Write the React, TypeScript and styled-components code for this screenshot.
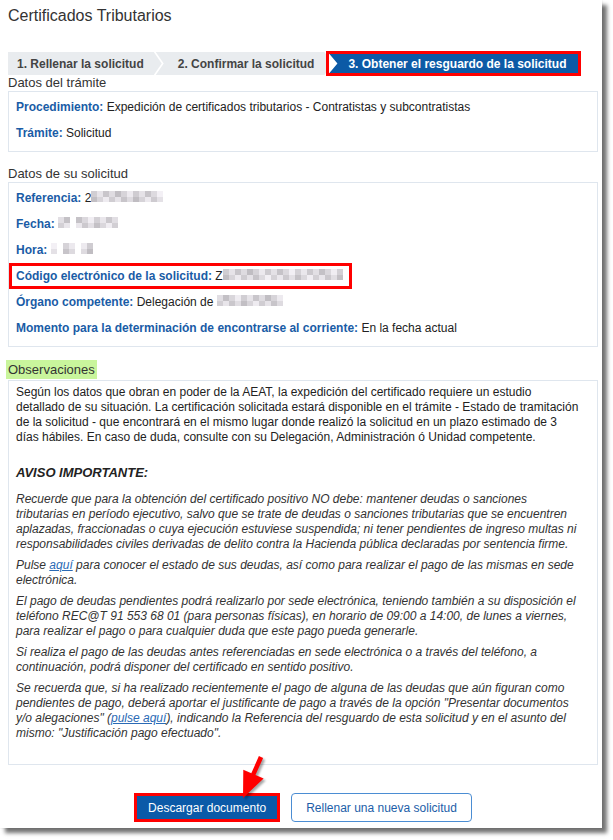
import styled, { createGlobalStyle } from "styled-components";

const GlobalStyle = createGlobalStyle`
  html, body {
    margin: 0;
    padding: 0;
    background: #fff;
  }
  body {
    font-family: "Liberation Sans", Arial, sans-serif;
    color: #333;
  }
`;

const Page = styled.div`
  width: 613px;
  height: 840px;
  overflow: hidden;
  background: #fff;
`;

const Card = styled.div`
  position: relative;
  box-sizing: border-box;
  width: 602px;
  height: 828px;
  padding: 7px 4px 6px 8px;
  background: #fff;
  box-shadow: 5px 5px 4px rgba(0, 0, 0, 0.55), 0 0 2px rgba(0, 0, 0, 0.12);
`;

const Title = styled.h1`
  margin: 0;
  font-size: 16px;
  line-height: 18px;
  font-weight: normal;
  color: #333;
`;

const StepBar = styled.div`
  display: flex;
  align-items: center;
  height: 25px;
  margin-top: 26px;
`;

const Step = styled.div<{ $first?: boolean }>`
  display: flex;
  align-items: center;
  height: 23px;
  padding: 0 18px 0 ${(p) => (p.$first ? 9 : 22)}px;
  margin-left: ${(p) => (p.$first ? 0 : -6)}px;
  background: #e9ecef;
  color: #444;
  font-size: 12px;
  font-weight: bold;
  white-space: nowrap;
  clip-path: ${(p) =>
    p.$first
      ? "polygon(0 0, calc(100% - 8px) 0, 100% 50%, calc(100% - 8px) 100%, 0 100%)"
      : "polygon(0 0, calc(100% - 8px) 0, 100% 50%, calc(100% - 8px) 100%, 0 100%, 8px 50%)"};
`;

const ActiveFrame = styled.div`
  position: relative;
  z-index: 2;
  margin-left: -6px;
  border: 3px solid #f00;
  background: #fff;
`;

const ActiveStep = styled.div`
  display: flex;
  align-items: center;
  height: 19px;
  padding: 0 12px 0 19px;
  background: #0c5aa6;
  color: #fff;
  font-size: 12px;
  font-weight: bold;
  white-space: nowrap;
  clip-path: polygon(0 0, 100% 0, 100% 100%, 0 100%, 8px 50%);
`;

const SectionLabel = styled.div<{ $gap: number }>`
  margin: ${(p) => p.$gap}px 0 1px;
  font-size: 13px;
  line-height: 15px;
  color: #333;
`;

const Panel = styled.div`
  display: flex;
  flex-direction: column;
  gap: 10px;
  border: 1px solid #dfe6ee;
  padding: 7px 8px 10px 7px;
`;

const Row = styled.div`
  height: 16px;
  font-size: 12px;
  line-height: 16px;
  color: #222;
  white-space: nowrap;
`;

const Key = styled.span`
  color: #1a5ca6;
  font-weight: bold;
`;

const Marked = styled.span`
  display: inline-block;
  margin: -5px 0 -5px -7px;
  padding: 2px 6px 2px 4px;
  border: 3px solid #f00;
`;

const Mosaic = styled.span`
  display: inline-flex;
  gap: 6px;
  height: 11px;
  vertical-align: text-top;
`;

const MosaicBlock = styled.span`
  display: inline-grid;
  grid-auto-flow: column;
  grid-template-rows: repeat(2, 5.5px);
  grid-auto-columns: 6px;
`;

const Cell = styled.span<{ $shade: number }>`
  background: ${(p) => `rgb(${p.$shade}, ${p.$shade - 3}, ${p.$shade + 2})`};
`;

const GreenTag = styled.span`
  display: inline-block;
  margin-left: -2px;
  padding: 2px 2px;
  background: #c9f59c;
`;

const NotesPanel = styled.div`
  border: 1px solid #dfe6ee;
  padding: 4px 10px 23px 7px;
  font-size: 12px;
  line-height: 15px;
  color: #222;
  white-space: nowrap;
`;

const Para = styled.p<{ $italic?: boolean }>`
  margin: 0 0 6px;
  font-style: ${(p) => (p.$italic ? "italic" : "normal")};
  color: ${(p) => (p.$italic ? "#333" : "#222")};
`;

const Warning = styled.p`
  margin: 20px 0 12px;
  font-size: 13px;
  font-weight: bold;
  font-style: italic;
  color: #222;
`;

const Link = styled.a`
  color: #2a6ab5;
  text-decoration: underline;
`;

const Actions = styled.div`
  display: flex;
  justify-content: center;
  gap: 11px;
  margin-top: 28px;
`;

const Button = styled.button<{ $primary?: boolean }>`
  box-sizing: border-box;
  height: 29px;
  padding: 0 ${(p) => (p.$primary ? 11 : 14)}px;
  font-family: "Liberation Sans", Arial, sans-serif;
  font-size: 12px;
  border-radius: ${(p) => (p.$primary ? 0 : 4)}px;
  border: ${(p) => (p.$primary ? "3px solid #f00" : "1px solid #4b8dd3")};
  background: ${(p) => (p.$primary ? "#0b5aa8" : "#fff")};
  color: ${(p) => (p.$primary ? "#fff" : "#1c5ea8")};
  cursor: pointer;
`;

const Arrow = styled.svg`
  position: absolute;
  left: 228px;
  top: 750px;
  width: 44px;
  height: 54px;
  filter: drop-shadow(2px 2px 1px rgba(0, 0, 0, 0.35));
`;

function Blur({ blocks, seed }: { blocks: number[]; seed: number }) {
  return (
    <Mosaic>
      {blocks.map((cols, b) => (
        <MosaicBlock key={b}>
          {Array.from({ length: cols * 2 }).map((_, i) => (
            <Cell key={i} $shade={192 + ((i * 37 + b * 23 + seed * 17) % 52)} />
          ))}
        </MosaicBlock>
      ))}
    </Mosaic>
  );
}

export default function App() {
  return (
    <Page>
      <GlobalStyle />
      <Card>
        <Title>Certificados Tributarios</Title>

        <StepBar>
          <Step $first>1. Rellenar la solicitud</Step>
          <Step>2. Confirmar la solicitud</Step>
          <ActiveFrame>
            <ActiveStep>3. Obtener el resguardo de la solicitud</ActiveStep>
          </ActiveFrame>
        </StepBar>

        <SectionLabel $gap={-1}>Datos del trámite</SectionLabel>
        <Panel>
          <Row>
            <Key>Procedimiento:</Key> Expedición de certificados tributarios - Contratistas y subcontratistas
          </Row>
          <Row>
            <Key>Trámite:</Key> Solicitud
          </Row>
        </Panel>

        <SectionLabel $gap={14}>Datos de su solicitud</SectionLabel>
        <Panel>
          <Row>
            <Key>Referencia:</Key> 2<Blur blocks={[12]} seed={1} />
          </Row>
          <Row>
            <Key>Fecha:</Key> <Blur blocks={[2, 7]} seed={2} />
          </Row>
          <Row>
            <Key>Hora:</Key> <Blur blocks={[1, 2, 2]} seed={3} />
          </Row>
          <Row>
            <Marked>
              <Key>Código electrónico de la solicitud:</Key> Z<Blur blocks={[20]} seed={4} />
            </Marked>
          </Row>
          <Row>
            <Key>Órgano competente:</Key> Delegación de <Blur blocks={[11]} seed={5} />
          </Row>
          <Row>
            <Key>Momento para la determinación de encontrarse al corriente:</Key> En la fecha actual
          </Row>
        </Panel>

        <SectionLabel $gap={13}>
          <GreenTag>Observaciones</GreenTag>
        </SectionLabel>
        <NotesPanel>
          <Para style={{ marginBottom: 0 }}>
            Según los datos que obran en poder de la AEAT, la expedición del certificado requiere un estudio
            <br />
            detallado de su situación. La certificación solicitada estará disponible en el trámite - Estado de tramitación
            <br />
            de la solicitud - que encontrará en el mismo lugar donde realizó la solicitud en un plazo estimado de 3
            <br />
            días hábiles. En caso de duda, consulte con su Delegación, Administración ó Unidad competente.
          </Para>
          <Warning>AVISO IMPORTANTE:</Warning>
          <Para $italic>
            Recuerde que para la obtención del certificado positivo NO debe: mantener deudas o sanciones
            <br />
            tributarias en período ejecutivo, salvo que se trate de deudas o sanciones tributarias que se encuentren
            <br />
            aplazadas, fraccionadas o cuya ejecución estuviese suspendida; ni tener pendientes de ingreso multas ni
            <br />
            responsabilidades civiles derivadas de delito contra la Hacienda pública declaradas por sentencia firme.
          </Para>
          <Para $italic>
            Pulse <Link href="#">aquí</Link> para conocer el estado de sus deudas, así como para realizar el pago de las mismas en sede
            <br />
            electrónica.
          </Para>
          <Para $italic>
            El pago de deudas pendientes podrá realizarlo por sede electrónica, teniendo también a su disposición el
            <br />
            teléfono REC@T 91 553 68 01 (para personas físicas), en horario de 09:00 a 14:00, de lunes a viernes,
            <br />
            para realizar el pago o para cualquier duda que este pago pueda generarle.
          </Para>
          <Para $italic>
            Si realiza el pago de las deudas antes referenciadas en sede electrónica o a través del teléfono, a
            <br />
            continuación, podrá disponer del certificado en sentido positivo.
          </Para>
          <Para $italic style={{ marginBottom: 0 }}>
            Se recuerda que, si ha realizado recientemente el pago de alguna de las deudas que aún figuran como
            <br />
            pendientes de pago, deberá aportar el justificante de pago a través de la opción "Presentar documentos
            <br />
            y/o alegaciones" (<Link href="#">pulse aquí</Link>), indicando la Referencia del resguardo de esta solicitud y en el asunto del
            <br />
            mismo: "Justificación pago efectuado".
          </Para>
        </NotesPanel>

        <Actions>
          <Button $primary>Descargar documento</Button>
          <Button>Rellenar una nueva solicitud</Button>
        </Actions>

        <Arrow viewBox="0 0 44 54">
          <polygon
            points="30.9,6.1 23.3,23.3 15.3,19.8 15,48 35.6,28.6 27.5,25.1 35.1,7.9"
            fill="#f00"
          />
        </Arrow>
      </Card>
    </Page>
  );
}
